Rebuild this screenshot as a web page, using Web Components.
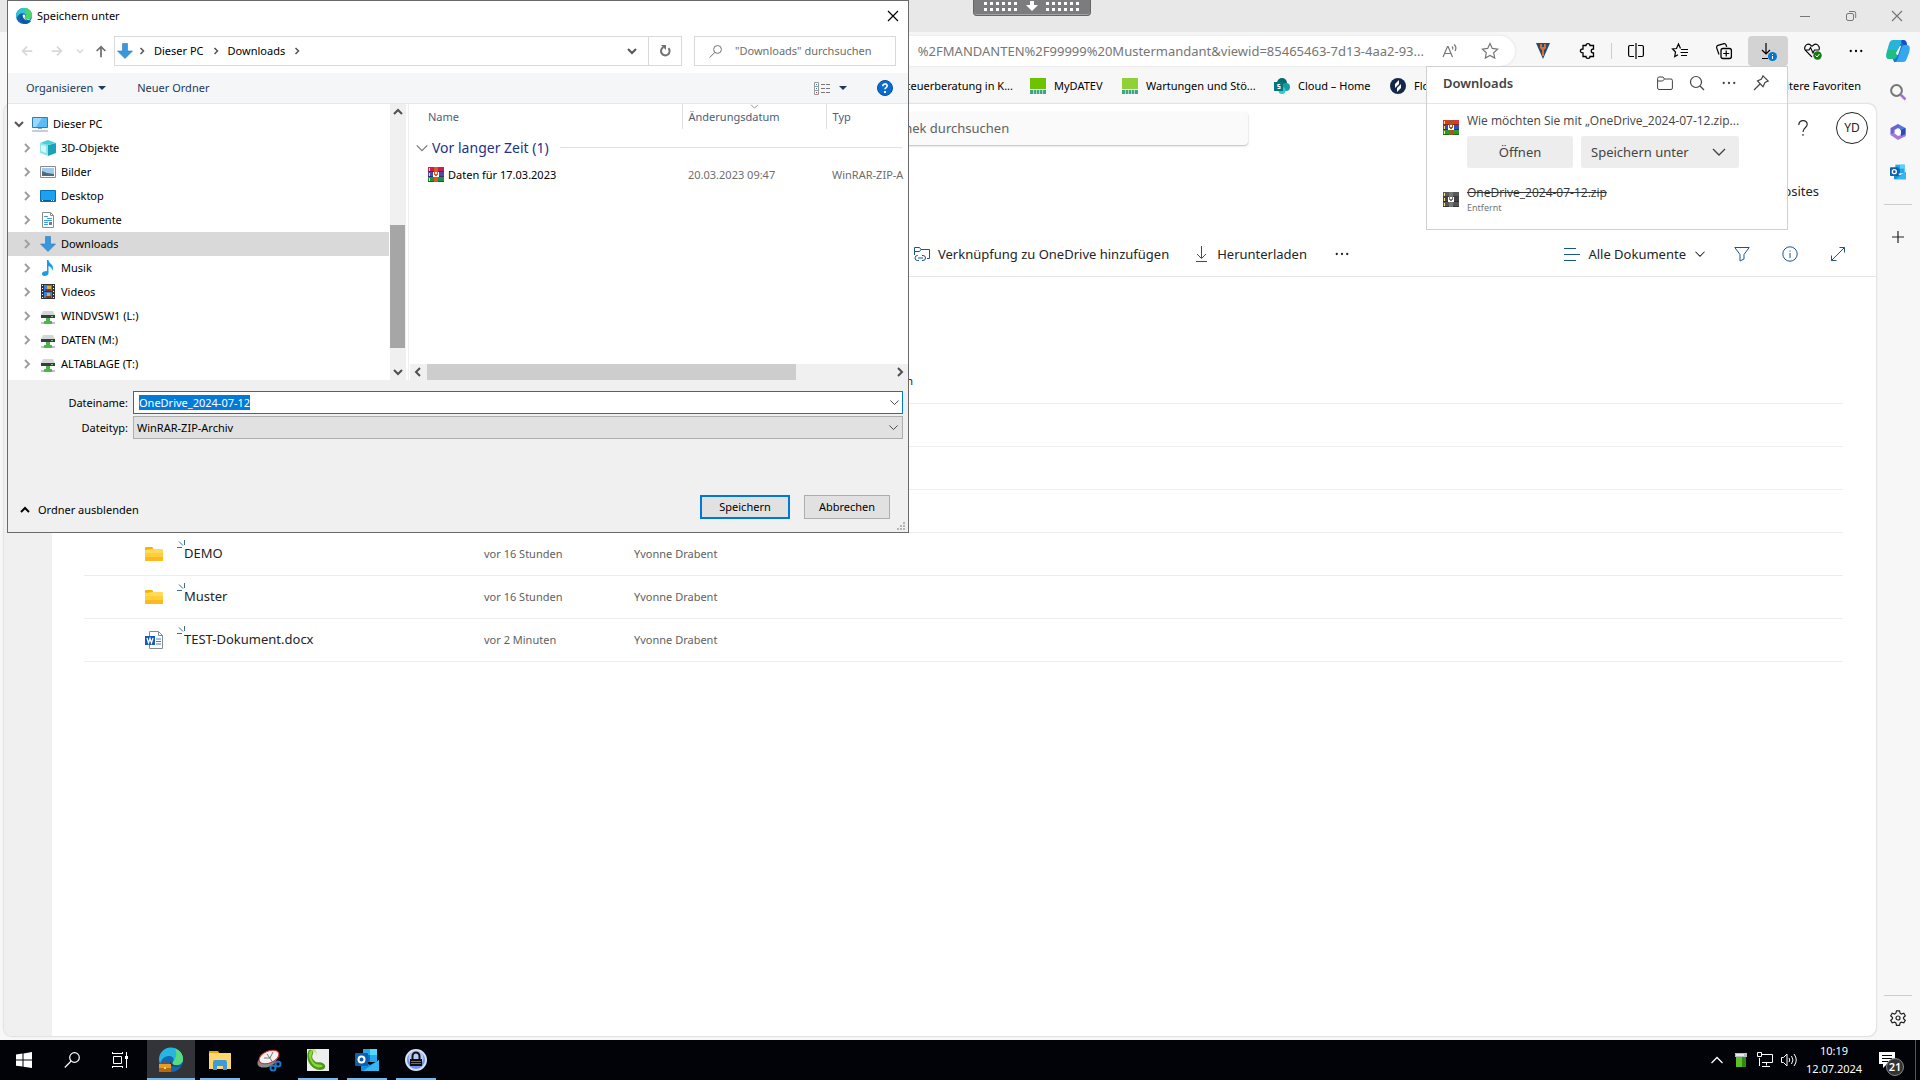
<!DOCTYPE html>
<html lang="de">
<head>
<meta charset="utf-8">
<title>Desktop</title>
<style>
  body {
    margin: 0;
    font-family: "Noto Sans", "Open Sans", sans-serif;
    font-size: 11px;
    line-height: 16px;
    color: #000;
  }
</style>
</head>
<body>
<desk-top>
  <browser-window></browser-window>
  <download-flyout slot="over"></download-flyout>
  <remote-bar slot="over"></remote-bar>
  <save-dialog slot="over"></save-dialog>
  <task-bar slot="bar"></task-bar>
</desk-top>

<script>
const stroke = (d, color = 'currentColor', width = 1) =>
  `<path d="${d}" fill="none" stroke="${color}" stroke-width="${width}"/>`

const rar = (a, b, c, d) => `
  <path fill="${a}" d="M0 0h16v5H0z"/><path fill="${b}" d="M0 5h16v5H0z"/><path fill="${c}" d="M0 10h16v5H0z"/>
  <path fill="#0005" d="M0 4h16v1H0zM0 9h16v1H0zM0 14h16v1H0z"/>
  <path fill="#fd8" d="M1 1h1v3H1zM1 6h1v3H1zM1 11h1v3H1z"/>
  <path fill="${d}" d="M6 0h4v15H6z"/><path fill="#fff" d="M5 5h6v5H5z"/><path fill="${d}" d="M6 5h1v3H6zM9 5h1v3H9zM7 7h2v2H7z"/>`

// name: [view box size, markup]
const ICONS = {
  edge: [24, `<circle cx="12" cy="12" r="12" fill="#1268b3"/>
    <path fill="#35c1d8" d="M0 12A12 12 0 0 1 24 11c0 4-3 6-7 6-3 0-4-1-3-3 2-4-1-6-4-6C5 8 2 12 1 16z"/>
    <path fill="#4dd56b" d="M12 0c7 0 12 5 12 11 0 4-3 6-7 6-3 0-4-1-3-3 3-4 1-10-2-14z"/>
    <path fill="#0c59a4" d="M9 9c-5 3-4 13 5 15 4-.5 7-2 9-5-6 3-16 0-14-10z"/>
    <path fill="#fff" d="M10 11c1-2 4-1 4 1 0 1-1 1-1 3 0 2 4 3 9 1-3 4-12 2-12-5z"/>`],
  edgework: [24, `<circle cx="12" cy="12" r="12" fill="#1268b3"/>
    <path fill="#28b5df" d="M0 12A12 12 0 0 1 24 11c0 4-3 6-7 6-3 0-4-1-3-3 2-4-1-6-4-6C5 8 2 12 1 16z"/>
    <path fill="#5bdc7c" d="M16 1c5 1 8 5 8 10 0 4-3 6-7 6-3 0-4-1-3-3 4-5 4-9 2-13z"/>
    <path fill="#333438" d="M11 13c2 5 7 6 12 4-2 2-8 2-12 0z"/>
    <path fill="#b36a12" d="M0 16h12v8H0z"/><path fill="#e69a27" d="M0 16h12v4H0z"/><path fill="#ffd24a" d="M5 19h2v2H5z"/>
    ${stroke('M4 16v-2h4v2', '#8a4b08')}`],
  down: [16, '<path fill="#3a96dd" stroke="#2b7cc0" stroke-width=".6" d="M5.500.5h5V8h5L8 15.500.500 8h5z"/>'],
  pc: [16, `<path fill="#5bbcf5" stroke="#2a7fb8" d="M.5 1.500h15v10H.5z"/><path fill="#9ad8fb" d="M1 2h9L4 11H1z"/>
    <path fill="#8aa0b4" d="M6 12h4v1H6zM0 14.500h16v1H0z"/>`],
  cube: [16, '<path fill="#8fe3ea" d="M0 3l8 2v11l-8-3z"/><path fill="#1aa3b8" d="M16 3L8 5v11l8-3z"/><path fill="#46cfdc" d="M0 3l8-3 8 3-8 2z"/><path fill="#d8f7f9" d="M1 5l5 1v7l-5-2z"/>'],
  image: [16, '<path fill="#fff" stroke="#8c8c8c" d="M.5 2.500h15v11H.5z"/><path fill="#9fc9ee" d="M2 4h12v8H2z"/><path fill="#4c6b78" d="M2 7l5 2 7 1v2H2z"/>'],
  desktop: [16, '<path fill="#1ba1f2" stroke="#0b6fb5" d="M.5 2.500h15v11H.5z"/><path fill="#0a5a94" d="M1 12h14v1H1z"/><path fill="#fff" d="M2 12h1v1H2zM11 12h1v1h-1zM13 12h1v1h-1z"/>'],
  doc: [16, `<path fill="#fff" stroke="#8c8c8c" d="M2.500.5h8l3 3v12h-11z"/>${stroke('M10.500.5v3h3', '#8c8c8c')}${stroke('M4 8.500h8M4 10.500h4M4 12.500h4M7 6.500h5M4 4.500h4', '#3d9be0')}<path fill="#5d8296" d="M9 10h3v3H9z"/>`],
  music: [16, '<path fill="#149cf0" d="M7 0h1.500c0 3 4.500 4 4.500 8 0 1-.5 2-1 3 0-3-1-4-3.500-5v7c0 2-2 3-4 3S2 15 2 13.500 4 11 7 11z"/>'],
  video: [16, '<path fill="#333" d="M1 0h14v15H1z"/><path fill="#3f7fd8" d="M4 1h8v6H4zM4 8h8v6H4z"/><path fill="#e0b13a" d="M7 2h4v3H7zM7 9h3v3H7z"/><path fill="#7b3f1c" d="M5 5h6v2H5zM6 12h5v2H6z"/><path fill="#fff" d="M2 1h1v1H2zM2 4h1v1H2zM2 7h1v1H2zM2 10h1v1H2zM2 13h1v1H2zM13 1h1v1h-1zM13 4h1v1h-1zM13 7h1v1h-1zM13 10h1v1h-1zM13 13h1v1h-1z"/>'],
  drive: [16, '<path fill="#d4d6d9" d="M3 3h10l2 4H1z"/><path fill="#3a3d40" d="M1 7h14v3H1z"/><path fill="#5fe06c" d="M11 8h2v1h-2z"/><path fill="#48b648" d="M6 10h4v3h2v3H4v-3h2z"/><path fill="#bfc3c6" d="M1 14h3v2H1zM12 14h3v2h-3z"/>'],
  rar: [16, rar('#c8214f', '#4a4aa8', '#1d9440', '#e2561d')],
  rar2: [16, rar('#d63a2a', '#2f4fc0', '#2b9a2b', '#a4571c')],
  rargray: [16, rar('#5a5a5a', '#444', '#555', '#777')],
  help: [16, '<circle cx="8" cy="8" r="7.500" fill="#0b6ccf" stroke="#08508f"/><path d="M5.800 6.200c0-3 4.400-3 4.400-.2 0 1.500-2.200 1.600-2.200 3.200" fill="none" stroke="#fff" stroke-width="1.600"/><path fill="#fff" d="M7 11h2v2H7z"/>'],
  view: [16, `<path fill="#fff" stroke="#999" d="M.5 2.500h4v12h-4z"/>${stroke('M1 6.500h4M1 10.500h4', '#999')}<path fill="#3a7bd5" d="M2 8h1v1H2zM2 4h1v1H2z"/><path fill="#d33" d="M2 12h1v1H2z"/>${stroke('M7 4.500h4M12 4.500h4M7 8.500h4M12 8.500h4M7 12.500h4M12 12.500h4', '#777')}`],
  back: [16, stroke('M14 8H3M8 3L3 8l5 5', '#d8d8d8', 2)],
  forward: [16, stroke('M2 8h11M8 3l5 5-5 5', '#d8d8d8', 2)],
  up: [16, stroke('M8 15V3M3 8l5-5 5 5', '#707070', 2)],
  chevdown: [16, stroke('M4 6l4 4 4-4', 'currentColor', 2)],
  chevup: [16, stroke('M4 10l4-4 4 4', 'currentColor', 2)],
  chevleft: [16, stroke('M10 4L6 8l4 4', 'currentColor', 2)],
  chevright: [16, stroke('M6 4l4 4-4 4', 'currentColor', 2)],
  thindown: [16, stroke('M2 5l6 6 6-6', 'currentColor', 1.400)],
  triangle: [16, '<path fill="currentColor" d="M4 6h8l-4 4z"/>'],
  refresh: [16, stroke('M11.500 5.200a4.300 4.300 0 1 1-5-1', '#707070', 2) + '<path fill="#707070" d="M4 2h5v5z"/>'],
  glass: [16, '<circle cx="10.500" cy="5.500" r="4.800" fill="none" stroke="currentColor" stroke-width="1.200"/>' + stroke('M7.200 9L.8 15.500', 'currentColor', 1.200)],
  close: [16, stroke('M3 3l10 10M13 3L3 13', 'currentColor', 1.200)],
  min: [16, stroke('M3 8.500h10')],
  restore: [16, '<rect x="3.500" y="5.500" width="7" height="7" rx="1.500" fill="none" stroke="currentColor"/>' + stroke('M6 3.500h5a1.700 1.700 0 0 1 1.700 1.700V10')],
  readaloud: [16, stroke('M1 14L5.500 3.500h.6L10.500 14M2.600 10.500h6.500M10 3.500c1 .8 1 2 .6 3M12 1.500c2.200 1.700 2.200 4.300 1 6.500', 'currentColor', 1.200)],
  star: [16, stroke('M8 .5l2.300 4.900 5.300.7-3.900 3.700 1 5.300L8 12.500l-4.700 2.600 1-5.300L.4 6.100l5.300-.7z', 'currentColor', 1.200)],
  vicon: [16, '<path fill="#1f4e74" d="M1 0h14L8 16z"/><path fill="#e8692c" d="M5 1h2v3h2V1h2v4L9 7v6H7V7L5 5z"/>'],
  puzzle: [16, stroke('M4 2.500h3c0-2.500 4-2.500 4 0h3.500V6c-3 0-3 4 0 4v3.500H11c0 2.500-4 2.500-4 0H4V10c-3.500 0-3.500-4 0-4z', 'currentColor', 1.300)],
  split: [16, stroke('M6 2.500H2A1.500 1.500 0 0 0 .6 4v8A1.500 1.500 0 0 0 2 13.500h4M10 2.500h4A1.500 1.500 0 0 1 15.400 4v8a1.500 1.500 0 0 1-1.400 1.500h-4M8 0v16', 'currentColor', 1.200)],
  favs: [16, stroke('M8.500 5.500L6.500 1 4.500 5.500l-4 .5 3 3-.8 4.600L6 11.800M9 6.500h7M8.500 9.500H16M9 12.500h6', 'currentColor', 1.200)],
  collect: [16, '<rect x="5" y="5.500" width="10.400" height="10" rx="2" fill="none" stroke="currentColor" stroke-width="1.300"/>' + stroke('M10.200 7.500v6M7.200 10.500h6M3 11.500L.6 4.600Q.4 3 2 2.400L8 .7q1.600-.2 2.200 1.600l.5 1.600', 'currentColor', 1.200)],
  dlbadge: [16, stroke('M6 0v11M2 7l4 4 4-4M2 15.500h6', 'currentColor', 1.200) + '<circle cx="12.500" cy="13.500" r="4.500" fill="#0078d4"/><path fill="#fff" d="M12 11h1v1h-1zM12 13h1v3h-1z"/>'],
  heart: [16, stroke('M8 14L1.500 7.500C-1 4 3-.5 6.500 2L8 3.300 9.500 2C13-.5 17 4 14.500 7.500M2 7h3l1.500-2.500L9 10l1.500-3H14', 'currentColor', 1.100) + '<circle cx="13.500" cy="12.500" r="4.200" fill="#107c10"/>' + stroke('M11.500 12.500l1.500 1.500 2.500-3', '#fff')],
  dots: [16, '<circle cx="2" cy="8" r="1.300"/><circle cx="8" cy="8" r="1.300"/><circle cx="14" cy="8" r="1.300"/>'],
  copilot: [24, '<path fill="#1f72d8" d="M9 1h8l3 4-7 18H8L6 18z"/><path fill="#28b4d8" d="M7 1h9l-5 16c-.6 2-2 3-4 3H3c-3 0-3.500-3-2-8l2-7c1-3 2-4 4-4z"/><path fill="#1dbd84" d="M2 11h11l-2 6c-.6 2-2 3-4 3H3c-3 0-3-4-1-9z"/><path fill="#1a4fc4" d="M17 1c-2 0-2 1-1 3s2 2 3 2h2c0-3-1-5-4-5z"/><path fill="#35a7f0" d="M17 23H8c2 0 3-1 4-4l3-9c.6-2 2-4 4-4h2c3 0 3.500 3 2 8l-2 5c-1 3-2 4-4 4z"/><path fill="#fff" d="M10 14l4-7h1l-3 9h-1z"/>'],
  railsearch: [16, '<circle cx="6.500" cy="6.500" r="5.400" fill="none" stroke="#767676" stroke-width="2"/><path d="M10.500 10.500l5 5" stroke="#a671d6" stroke-width="2.500"/>'],
  m365: [16, '<path fill="#4d7be0" d="M8 0l7.500 4v8L11 14l-1-9-5-2z"/><path fill="#6f63d2" d="M8 0L.5 4v7l4-2V6l5-3z"/><path fill="#a878d8" d="M.5 11l7.500 5 7.500-4v-2L8 12l-4-3z"/><path fill="#2f4bb0" d="M11 6l4.500-2v6L11 12z"/><path fill="#fff" d="M8 4.800l3 1.600v3.200l-3 1.600-3-1.600V6.400z"/>'],
  outlook: [24, '<path fill="#28a8ea" d="M8 1h14v13H8z"/><path fill="#50d9ff" d="M15 1h7v6h-7z"/><path fill="#0f6cbd" d="M8 7h7v7H8z"/><path fill="#1490df" d="M6 12l9 5 9-5v11H6z"/><path fill="#35b8f1" d="M24 12v11H8z"/><rect y="5" width="13" height="13" rx="1" fill="#0f5fae"/><circle cx="6.500" cy="11.500" r="3" fill="none" stroke="#fff" stroke-width="2"/>'],
  plus: [16, stroke('M8 2v12M2 8h12', 'currentColor', 1.200)],
  gear: [16, '<circle cx="8" cy="8" r="2" fill="none" stroke="currentColor" stroke-width="1.200"/>' + stroke('M6.500.8h3l.6 2.400 1.300.8 2.400-.8 1.500 2.600L13.500 7.500v1.200l1.800 1.600-1.500 2.600-2.400-.7-1.300.8-.6 2.300h-3l-.6-2.300-1.300-.8-2.400.7L.7 10.300l1.800-1.600V7.500L.7 5.800l1.500-2.600 2.400.8 1.300-.8z', 'currentColor', 1.200)],
  folderline: [16, stroke('M.6 13V3.500q0-1.500 1.500-1.500H6l1.500 2H14q1.400 0 1.400 1.500V13q0 1.500-1.400 1.500H2Q.6 14.500.6 13zM.6 6h5L7.500 4')],
  search: [16, '<circle cx="7" cy="7" r="5.500" fill="none" stroke="currentColor" stroke-width="1.200"/>' + stroke('M11 11l4 4', 'currentColor', 1.200)],
  pin: [16, stroke('M10 .8L15.200 6 12 7.500l-2 4.200L4.500 6 8.500 4zM7 9L1 15', 'currentColor', 1.200)],
  datev: [16, '<path fill="#6cc400" d="M0 0h16v11H0z"/>' + stroke('M0 14h16', '#3fa58a', 4) + stroke('M3.500 12v4M6.500 12v4M9.500 12v4M12.500 12v4', '#f7f7f7', .600)],
  datev2: [16, '<path fill="#92d038" d="M0 0h16v11H0z"/>' + stroke('M0 14h16', '#3fa58a', 4) + stroke('M3.500 12v4M6.500 12v4M9.500 12v4M12.500 12v4', '#f7f7f7', .600)],
  sharepoint: [16, '<circle cx="8" cy="5" r="5" fill="#036c70"/><circle cx="12" cy="9" r="4" fill="#1a9ba1"/><circle cx="8" cy="12.500" r="3.500" fill="#37c6d0"/><path fill="#03787c" d="M0 4h9v9H0z"/>' + stroke('M6.200 6.500H4v2h2v2H3.500', '#fff', 1.200)],
  flow: [16, '<circle cx="8" cy="8" r="8" fill="#14284b"/><path fill="#fff" d="M9 2L5 6v4l4-4zM11 6L7 10v4l4-4z"/>'],
  addlink: [16, stroke('M.5 9V1.500h5L7 3.500h8.500v9H13M.5 5.500h5L7 3.500M4 9.500H3.500a2.500 2.500 0 0 0 0 5H5M8 9.500h1a2.500 2.500 0 0 1 0 5H8M4 12h5', '#1a5490')],
  fetch: [16, stroke('M8.500 0v12M4 8l4.500 4.500L13 8M3 15.500h11', '#1a5490')],
  lines: [16, stroke('M0 2.500h12M0 8.500h16M0 14.500h12', '#1a5490')],
  filter: [16, stroke('M.8 1.500h14.400L10 8.500V13l-4 2V8.500z', '#1a5490')],
  info: [16, '<circle cx="8" cy="8" r="7.200" fill="none" stroke="#1a5490"/>' + stroke('M8 7v5M8 4.500v1.200', '#1a5490')],
  expand: [16, stroke('M9.500 1.500h5v5M14.500 1.500l-13 13M1.500 9.500v5h5', '#1a5490')],
  question: [16, stroke('M3.800 5C3.500-.8 12.500-.8 12.200 4.500 12 8 8 7.500 8 12M8 14v1.800', 'currentColor', 1.200)],
  folder: [18, '<path fill="#f5b400" d="M0 3q0-1 1-1h6l1 1v3H0z"/><path fill="#ffdb57" d="M0 5l8-1h9q1 0 1 1v11H0z"/><path fill="#fece3c" d="M0 8h18v4H0z"/><path fill="#fdb91f" d="M0 12h18v3q0 1-1 1H1q-1 0-1-1z"/>'],
  word: [18, `<path fill="#fff" stroke="#8a8a8a" d="M4.500.5h9l4 4v13h-13z"/>${stroke('M13.500.5v4h4', '#8a8a8a')}${stroke('M11 8h5M11 10.500h5M11 13h5', '#2b88d8', 1.200)}<path fill="#185abd" d="M0 5h10v9H0z"/>${stroke('M2 7l1.500 5L5 7.500 6.500 12 8 7', '#fff', 1.200)}`],
  spark: [8, stroke('M7.500 0v5M2 1.500l4 4M0 7.500h5', '#3b6f96')],
  start: [16, '<path fill="#fff" d="M0 2.500L6.500 1.600v6H0zM7.500 1.400L16 0v7.600H7.500zM0 8.600h6.500v6L0 13.700zM7.500 8.600H16V16l-8.500-1.200z"/>'],
  taskview: [16, stroke('M0 1.500h11M0 14.500h11M1.500 4.500h8v7h-8zM.5 0v2M10.500 0v2M.5 14v2M10.500 14v2M14.500 0v16', '#fff') + '<path fill="#fff" d="M13 4h3v3h-3z"/>'],
  explorer: [24, '<path fill="#e8a317" d="M1 3h9l2 3H1z"/><path fill="#ffd66b" d="M1 5h22v16H1z"/><path fill="#3e9bdb" d="M5 14q0-2 2-2h10q2 0 2 2v8h-4v-4H9v4H5z"/>'],
  snip: [24, '<ellipse cx="10" cy="13" rx="10" ry="6" transform="rotate(-20 10 13)" fill="#8b8b8b"/><ellipse cx="12" cy="9" rx="10.500" ry="6" transform="rotate(-22 12 9)" fill="#f2f2f2" stroke="#d42a2a"/>' + stroke('M7 10h6l3-6M10 6l7 10', '#777') + '<circle cx="16" cy="20" r="2.500" fill="none" stroke="#1e78c8" stroke-width="2"/><circle cx="21" cy="16" r="2.500" fill="none" stroke="#1e78c8" stroke-width="2"/>'],
  phone: [24, '<path fill="#eee" d="M1 1h22v22H1z"/><path fill="#4a9a18" d="M3 2c4-1 5 2 4 4-2 3 0 6 3 8 2 1 4-1 8 2 3 3 0 6-4 6C5 22-2 10 3 2z"/><path fill="#8fd43a" d="M4 3c3-1 3 1 2 3-2 4 1 8 4 10 3 1 5 0 7 2-4 3-9 1-12-4C3 10 2 6 4 3z"/><path fill="#b9e36b" d="M4 2c5 1 7 3 6 7 1-3 1-6-2-8z"/>'],
  keepass: [24, '<circle cx="12" cy="12" r="10" fill="#6f93e6" stroke="#d7e1f7" stroke-width="2"/><circle cx="12" cy="10" r="7.500" fill="#b8cbf5"/>' + stroke('M8.500 12V8a3.500 3.500 0 0 1 7 0v4', '#111', 2) + '<path fill="#111" d="M6 11h12v7H6z"/>' + stroke('M7 13.500h10M7 15.500h10', '#8fa8e0', .600)],
  traychev: [16, stroke('M2.500 11L8 5.500 13.500 11', '#fff', 1.300)],
  usb: [16, '<path fill="#b9bccb" d="M2 1h12v4H2z"/><path fill="#e8e8f4" d="M3 2h8v2H3z"/><path fill="#5fbf2a" d="M3 5h10v10H3z"/><path fill="#2f8a12" d="M9 5h4v10H9z"/>'],
  network: [16, stroke('M4.500 2.500h11v8H5M2.500 6v8M9.500 11v2.500M5 14.500h8M.5.5h4v4h-4z', '#fff')],
  sound: [16, stroke('M.5 5.500h2L6 2v12l-3.500-3.500h-2zM8 6q1.500 2 0 4M10.500 4q3 4 0 8M13 2q4.500 6 0 12', '#fff')],
  notify: [16, '<path fill="#fff" d="M0 0h16v12h-8l-4 4v-4H0z"/>' + stroke('M3 3.500h10M3 6.500h10M3 9.500h6', '#000', 1.200)],
  grip: [8, '<path fill="#b5b5b5" d="M6 0h2v2H6zM3 3h2v2H3zM6 3h2v2H6zM0 6h2v2H0zM3 6h2v2H3zM6 6h2v2H6z"/>']
}

/**
 * Registers an element whose shadow root is cloned from the given markup.
 */
function define (name, markup, Base = HTMLElement) {
  const template = document.createElement('template')
  template.innerHTML = markup

  customElements.define(name, class extends Base {
    connectedCallback () {
      if (this.shadowRoot) return
      this.attachShadow({ mode: 'open' })
      this.shadowRoot.appendChild(template.content.cloneNode(true))
      if (this.ready) this.ready()
    }
  })
}

/**
 * A drawn icon: <svg-icon name="star" size="16">.
 */
customElements.define('svg-icon', class extends HTMLElement {
  connectedCallback () {
    if (this.shadowRoot) return
    const [box, markup] = ICONS[this.getAttribute('name')]
    const size = this.getAttribute('size') || 16
    this.attachShadow({ mode: 'open' })
    this.shadowRoot.innerHTML = `
      <style>
        :host { display: inline-flex; flex: none; }
        svg { display: block; overflow: visible; }
      </style>
      <svg width="${size}" height="${size}" viewBox="0 0 ${box} ${box}" fill="currentColor" aria-hidden="true">${markup}</svg>`
  }
})

// Shared by every element that holds buttons
const reset = `
  * { box-sizing: border-box; }
  button, input, select {
    margin: 0;
    padding: 0;
    border: 0;
    background: none;
    font: inherit;
    color: inherit;
    outline: none;
  }
  button { display: flex; align-items: center; justify-content: center; }
  a { color: inherit; text-decoration: none; }
`

define('desk-top', `
<style>
  :host { display: flex; flex-direction: column; height: 100vh; position: relative; overflow: hidden; }
  ::slotted(browser-window) { flex: 1; min-height: 0; }
</style>
<slot></slot>
<slot name="bar"></slot>
<slot name="over"></slot>
`)

define('browser-window', `
<style>
  ${reset}
  :host { display: flex; flex-direction: column; background: #f7f7f7; }
  header { display: flex; justify-content: flex-end; height: 32px; background: #e8e8e8; color: #777; }
  header button { width: 46px; }
  .body { flex: 1; min-height: 0; display: flex; }
  .left { flex: 1; min-width: 0; display: flex; flex-direction: column; }
  .panel {
    flex: 1;
    display: flex;
    margin: 0 0 4px 4px;
    border-radius: 8px;
    overflow: hidden;
    background: #fff;
    box-shadow: 0 0 2px #aaa;
  }
  .appbar { width: 48px; background: #f0f0f0; }
  library-page { flex: 1; min-width: 0; }
</style>
<header>
  <button aria-label="Minimieren"><svg-icon name="min"></svg-icon></button>
  <button aria-label="Verkleinern"><svg-icon name="restore"></svg-icon></button>
  <button aria-label="Schließen"><svg-icon name="close"></svg-icon></button>
</header>
<browser-toolbar></browser-toolbar>
<div class="body">
  <div class="left">
    <bookmark-bar></bookmark-bar>
    <div class="panel">
      <div class="appbar"></div>
      <library-page></library-page>
    </div>
  </div>
  <side-rail></side-rail>
</div>
`)

define('browser-toolbar', `
<style>
  ${reset}
  :host { display: flex; align-items: center; gap: 4px; padding: 4px 4px 0 100px; }
  .address {
    flex: 1;
    display: flex;
    height: 30px;
    margin-right: 4px;
    padding-right: 5px;
    border-radius: 15px;
    background: #fff;
    box-shadow: 0 0 3px #ddd;
    color: #767676;
  }
  .address input { flex: 1; min-width: 0; padding-right: 6px; text-align: right; font-size: 13px; }
  button { width: 40px; height: 30px; border-radius: 4px; }
  button.on { background: #d3d3d3; }
  button.copilot { width: 36px; }
  i { width: 1px; height: 16px; background: #ccc; }
</style>
<div class="address">
  <input aria-label="Adresse" value="%2FMANDANTEN%2F99999%20Mustermandant&amp;viewid=85465463-7d13-4aa2-93...">
  <button aria-label="Laut vorlesen"><svg-icon name="readaloud"></svg-icon></button>
  <button aria-label="Zu Favoriten"><svg-icon name="star"></svg-icon></button>
</div>
<button aria-label="Erweiterung"><svg-icon name="vicon"></svg-icon></button>
<button aria-label="Erweiterungen"><svg-icon name="puzzle"></svg-icon></button>
<i></i>
<button aria-label="Geteilter Bildschirm"><svg-icon name="split"></svg-icon></button>
<button aria-label="Favoriten"><svg-icon name="favs"></svg-icon></button>
<button aria-label="Sammlungen"><svg-icon name="collect"></svg-icon></button>
<button class="on" aria-label="Downloads"><svg-icon name="dlbadge"></svg-icon></button>
<button aria-label="Browser-Essentials"><svg-icon name="heart"></svg-icon></button>
<button aria-label="Mehr"><svg-icon name="dots" size="14"></svg-icon></button>
<button class="copilot" aria-label="Copilot"><svg-icon name="copilot" size="24"></svg-icon></button>
`)

define('bookmark-bar', `
<style>
  ${reset}
  :host {
    box-sizing: border-box;
    display: grid;
    grid-template-columns: 1030px 92px 152px 116px 1fr auto;
    align-items: center;
    height: 38px;
    padding: 2px 15px 0 0;
  }
  a { display: flex; align-items: center; gap: 8px; white-space: nowrap; }
  a:first-of-type { justify-content: flex-end; padding-right: 17px; }
</style>
<a href="#">Steuerberatung in K...</a>
<a href="#"><svg-icon name="datev"></svg-icon>MyDATEV</a>
<a href="#"><svg-icon name="datev2"></svg-icon>Wartungen und Stö...</a>
<a href="#"><svg-icon name="sharepoint"></svg-icon>Cloud – Home</a>
<a href="#"><svg-icon name="flow"></svg-icon>Flo</a>
<a href="#">Weitere Favoriten</a>
`)

define('side-rail', `
<style>
  ${reset}
  :host { display: flex; flex-direction: column; align-items: center; width: 44px; padding-top: 6px; color: #222; }
  button { width: 40px; height: 40px; }
  hr { width: 28px; height: 1px; margin: 12px 0; border: 0; background: #ccc; }
  .end { display: flex; flex-direction: column; align-items: center; margin-top: auto; padding-bottom: 2px; }
  .end hr { margin: 0 0 2px; }
</style>
<button aria-label="Suche"><svg-icon name="railsearch"></svg-icon></button>
<button aria-label="Microsoft 365"><svg-icon name="m365"></svg-icon></button>
<button aria-label="Outlook"><svg-icon name="outlook" size="16"></svg-icon></button>
<hr>
<button aria-label="Hinzufügen"><svg-icon name="plus"></svg-icon></button>
<div class="end">
  <hr>
  <button aria-label="Einstellungen"><svg-icon name="gear"></svg-icon></button>
</div>
`)

define('library-page', `
<style>
  ${reset}
  :host { display: flex; flex-direction: column; font-size: 13px; color: #242424; }
  .suite { display: flex; align-items: center; height: 48px; padding-right: 8px; }
  .suite input {
    width: 464px;
    height: 33px;
    margin-left: 732px;
    padding-left: 44px;
    border-radius: 4px;
    background: #fafafa;
    box-shadow: 0 1px 2px #bbb;
  }
  .suite input::placeholder { color: #616161; opacity: 1; }
  .suite .help { width: 32px; height: 32px; margin-left: auto; }
  .avatar { width: 32px; height: 32px; margin-left: 17px; border: 1px solid #222; border-radius: 50%; font-size: 12px; }
  .follow { display: flex; justify-content: flex-end; align-items: center; height: 80px; padding: 0 57px 2px 0; }
  .commands {
    display: flex;
    align-items: center;
    height: 45px;
    padding: 0 26px 0 862px;
    border-bottom: 1px solid #e6e6e6;
  }
  .commands button { gap: 8px; }
  .commands button + button { margin-left: 24px; }
  .commands button.more { margin-left: 28px; }
  .commands button.views { margin-left: auto; }
  .commands .views ~ button { width: 24px; }
  file-table { margin: 83px 33px 0 32px; }
</style>
<div class="suite">
  <input type="search" aria-label="Suche" placeholder="Diese Bibliothek durchsuchen">
  <button class="help" aria-label="Hilfe"><svg-icon name="question"></svg-icon></button>
  <button class="avatar">YD</button>
</div>
<div class="follow"><a href="#">Websites</a></div>
<div class="commands">
  <button><svg-icon name="addlink"></svg-icon>Verknüpfung zu OneDrive hinzufügen</button>
  <button><svg-icon name="fetch"></svg-icon>Herunterladen</button>
  <button class="more" aria-label="Weitere Befehle"><svg-icon name="dots" size="14"></svg-icon></button>
  <button class="views"><svg-icon name="lines"></svg-icon>Alle Dokumente<svg-icon name="thindown" size="12"></svg-icon></button>
  <button aria-label="Filter"><svg-icon name="filter"></svg-icon></button>
  <button aria-label="Details"><svg-icon name="info"></svg-icon></button>
  <button aria-label="Erweitern"><svg-icon name="expand"></svg-icon></button>
</div>
<file-table></file-table>
`)

define('file-table', `
<style>
  ${reset}
  :host { display: block; }
  table { width: 100%; table-layout: fixed; border-collapse: collapse; font-size: 11px; color: #616161; }
  th, td { height: 43px; padding: 0; border-bottom: 1px solid #ededed; text-align: left; }
  .kind { width: 100px; padding-left: 61px; }
  .kind svg-icon { vertical-align: middle; }
  .name { width: 300px; }
  .date { width: 150px; }
  .author { width: 180px; }
  th:last-child { font-weight: 400; color: #242424; }
  th span { display: block; width: 99px; text-align: right; white-space: nowrap; }
  td.name a { position: relative; font-size: 13px; color: #242424; }
  td.name a svg-icon { position: absolute; left: -7px; top: -4px; }
</style>
<table>
  <thead>
    <tr><th class="kind"></th><th class="name"></th><th class="date"></th><th class="author"></th><th><span>Spalte hinzufügen</span></th></tr>
  </thead>
  <tbody>
    <tr><td></td><td></td><td></td><td></td><td></td></tr>
    <tr><td></td><td></td><td></td><td></td><td></td></tr>
    <tr><td></td><td></td><td></td><td></td><td></td></tr>
    <tr><td class="kind"><svg-icon name="folder" size="18"></svg-icon></td><td class="name"><a href="#"><svg-icon name="spark" size="8"></svg-icon>DEMO</a></td><td>vor 16 Stunden</td><td>Yvonne Drabent</td><td></td></tr>
    <tr><td class="kind"><svg-icon name="folder" size="18"></svg-icon></td><td class="name"><a href="#"><svg-icon name="spark" size="8"></svg-icon>Muster</a></td><td>vor 16 Stunden</td><td>Yvonne Drabent</td><td></td></tr>
    <tr><td class="kind"><svg-icon name="word" size="18"></svg-icon></td><td class="name"><a href="#"><svg-icon name="spark" size="8"></svg-icon>TEST-Dokument.docx</a></td><td>vor 2 Minuten</td><td>Yvonne Drabent</td><td></td></tr>
  </tbody>
</table>
`)

define('download-flyout', `
<style>
  ${reset}
  :host {
    position: absolute;
    top: 66px;
    right: 132px;
    box-sizing: border-box;
    width: 362px;
    height: 164px;
    border: 1px solid #d0d0d0;
    background: #fff;
    color: #444;
  }
  header { display: flex; align-items: center; height: 37px; padding: 0 10px 4px 16px; border-bottom: 1px solid #e5e5e5; }
  h2 { flex: 1; margin: 0; font-size: 13px; font-weight: 600; }
  header button { width: 32px; height: 32px; }
  .item { display: grid; grid-template-columns: 16px 1fr; column-gap: 8px; padding: 8px 16px 0; }
  .item > svg-icon { margin-top: 8px; }
  .item p { margin: 0; font-family: "Open Sans", sans-serif; font-size: 12px; line-height: 18px; }
  .item small { display: block; font-size: 9px; line-height: 12px; color: #767676; }
  .item s { color: #333; }
  .row { display: flex; gap: 8px; margin-top: 6px; }
  .row button { height: 32px; border-radius: 2px; background: #ededed; font-size: 13px; }
  .open { width: 106px; }
  .row .saveas { width: 158px; justify-content: space-between; padding: 0 12px 0 10px; }
  .gone { padding-top: 16px; }
</style>
<header>
  <h2>Downloads</h2>
  <button aria-label="Ordner öffnen"><svg-icon name="folderline"></svg-icon></button>
  <button aria-label="Downloads durchsuchen"><svg-icon name="search"></svg-icon></button>
  <button aria-label="Weitere Optionen"><svg-icon name="dots" size="14"></svg-icon></button>
  <button aria-label="Anheften"><svg-icon name="pin"></svg-icon></button>
</header>
<div class="item">
  <svg-icon name="rar2"></svg-icon>
  <div>
    <p>Wie möchten Sie mit „OneDrive_2024-07-12.zip...</p>
    <div class="row">
      <button class="open">Öffnen</button>
      <button class="saveas">Speichern unter<svg-icon name="thindown"></svg-icon></button>
    </div>
  </div>
</div>
<div class="item gone">
  <svg-icon name="rargray"></svg-icon>
  <div><p><s>OneDrive_2024-07-12.zip</s></p><small>Entfernt</small></div>
</div>
`)

define('remote-bar', `
<style>
  :host {
    position: absolute;
    top: 0;
    left: 973px;
    box-sizing: border-box;
    display: flex;
    align-items: center;
    justify-content: center;
    gap: 8px;
    width: 118px;
    height: 16px;
    padding-bottom: 3px;
    border: 1px solid #666;
    border-top: 0;
    border-radius: 0 0 4px 4px;
    background: #7c7c7e;
    box-shadow: inset 0 -1px 0 #a5a5a5;
  }
  svg { display: block; }
</style>
<svg width="34" height="9"><path d="M0 1.500h34M0 7.500h34" stroke="#fff" stroke-width="3" stroke-dasharray="3 3"/></svg>
<svg width="12" height="10"><path fill="#fff" d="M4 0h4v4h4l-6 6-6-6h4z"/></svg>
<svg width="34" height="9"><path d="M0 1.500h34M0 7.500h34" stroke="#fff" stroke-width="3" stroke-dasharray="3 3"/></svg>
`)

define('tree-item', `
<style>
  :host {
    display: flex;
    align-items: center;
    height: 24px;
    padding-left: 11px;
    color: #a0a0a0;
  }
  :host([root]) { padding-left: 3px; color: #555; }
  :host([selected]) { background: #d9d9d9; }
  slot[name] { display: flex; }
  .mark { margin-right: 5px; }
  .label { margin-left: 5px; color: #000; }
</style>
<svg-icon class="mark" name="chevright"></svg-icon>
<slot name="icon"></slot>
<span class="label"><slot></slot></span>
`, class extends HTMLElement {
  ready () {
    if (this.hasAttribute('root')) {
      const open = document.createElement('svg-icon')
      open.setAttribute('name', 'chevdown')
      open.className = 'mark'
      this.shadowRoot.querySelector('.mark').replaceWith(open)
    }
  }
})

define('save-dialog', `
<style>
  ${reset}
  :host {
    position: absolute;
    top: 0;
    left: 7px;
    box-sizing: border-box;
    display: flex;
    flex-direction: column;
    width: 902px;
    height: 533px;
    border: 1px solid #6a6a6a;
    background: #fff;
  }
  .title { display: flex; align-items: center; gap: 5px; height: 30px; padding: 0 7px 0 8px; }
  .title button { margin-left: auto; }
  .nav { display: flex; align-items: center; height: 42px; padding: 0 12px 2px 11px; }
  .nav > button { width: 16px; height: 30px; margin-right: 14px; }
  .nav > button.recent { width: 12px; margin: 0 7px 0 -5px; color: #d8d8d8; }
  .nav > button.parent { margin-right: 5px; }
  .path { flex: 1; display: flex; align-items: center; height: 30px; border: 1px solid #d9d9d9; color: #555; }
  .path > svg-icon:first-child { margin: 0 3px 0 2px; }
  .path a { margin: 0 6px; color: #000; }
  .path button { width: 33px; height: 28px; }
  .path .history { margin-left: auto; width: 32px; }
  .path .reload { border-left: 1px solid #d9d9d9; }
  .find { display: flex; align-items: center; gap: 13px; width: 202px; height: 30px; margin-left: 12px; padding: 0 4px 0 14px; border: 1px solid #d9d9d9; color: #6d6d6d; }
  .find input { flex: 1; min-width: 0; }
  .find input::placeholder { color: #6d6d6d; opacity: 1; }
  .tools { display: flex; align-items: center; height: 31px; padding: 0 15px 0 18px; border-bottom: 1px solid #e5e7ea; background: #f4f6f8; color: #1e395b; }
  .tools button { gap: 1px; }
  .tools .view { gap: 5px; margin-left: auto; margin-right: 26px; }
  .tools .new { margin-left: 27px; }
  .panes { display: flex; height: 276px; }
  .tree { width: 381px; padding-top: 8px; overflow: hidden; }
  .vbar { width: 16px; display: flex; flex-direction: column; align-items: center; margin-left: 1px; background: #f0f0f0; color: #505050; }
  .vbar i { width: 15px; height: 123px; margin: 105px 1px auto 0; background: #a6a6a6; }
  .list { flex: 1; min-width: 0; display: flex; flex-direction: column; margin-left: 2px; border-left: 1px solid #eee; overflow: hidden; }
  table { width: 499px; table-layout: fixed; border-collapse: collapse; }
  th, td { padding: 0 0 0 6px; font-weight: 400; text-align: left; white-space: nowrap; }
  th { height: 25px; color: #4c607a; border-right: 1px solid #e0e0e0; position: relative; }
  th:first-child, td:first-child { width: 273px; padding-left: 19px; }
  th:nth-child(2) { width: 144px; }
  th:last-child { border: 0; }
  th svg-icon { position: absolute; top: -2px; left: 67px; color: #777; }
  .group { height: 37px; }
  .group div { display: flex; align-items: center; gap: 3px; margin-left: -13px; font-size: 14px; color: #1e3287; }
  .group svg-icon { color: #777; }
  .group span { flex: 1; height: 1px; margin: 0 6px 0 8px; background: #e0e0e0; }
  .file td { height: 18px; color: #6d6d6d; }
  .file div { display: flex; align-items: center; gap: 4px; color: #000; }
  .hbar { display: flex; align-items: center; height: 16px; margin-top: auto; margin-left: 1px; background: #f0f0f0; color: #505050; }
  .hbar i { width: 369px; height: 16px; margin: 0 auto 0 1px; background: #cdcdcd; }
  form { flex: 1; display: flex; flex-direction: column; background: #f0f0f0; }
  .fields { display: grid; grid-template-columns: 120px 1fr; gap: 2px 5px; padding: 11px 5px 0 0; text-align: right; }
  .fields label { line-height: 23px; }
  .box { display: flex; align-items: center; height: 23px; border: 1px solid #adadad; background: #e1e1e1; position: relative; color: #444; }
  .box input, .box select { flex: 1; height: 15px; padding-left: 5px; line-height: 15px; color: #000; }
  .box select { height: 21px; padding-left: 3px; appearance: none; }
  .box.name { border-color: #0078d7; background: #fff; }
  .box button { width: 16px; }
  .box > svg-icon { position: absolute; right: 3px; pointer-events: none; }
  .box input::selection { background: rgba(0, 120, 215, .99); color: #fff; }
  .actions { display: flex; align-items: flex-end; margin-top: auto; padding: 0 18px 13px 9px; position: relative; }
  .actions .fold { gap: 5px; margin-right: auto; height: 18px; color: #000; }
  .actions .push { width: 86px; height: 24px; margin-left: 14px; border: 1px solid #adadad; background: #e1e1e1; }
  .actions .push.main { width: 90px; border: 2px solid #0078d7; }
  .actions > svg-icon { position: absolute; right: 3px; bottom: 2px; }
</style>
<div class="title">
  <svg-icon name="edge"></svg-icon>Speichern unter
  <button aria-label="Schließen"><svg-icon name="close"></svg-icon></button>
</div>
<div class="nav">
  <button aria-label="Zurück"><svg-icon name="back" size="14"></svg-icon></button>
  <button aria-label="Vorwärts"><svg-icon name="forward" size="14"></svg-icon></button>
  <button class="recent" aria-label="Zuletzt besucht"><svg-icon name="chevdown" size="12"></svg-icon></button>
  <button class="parent" aria-label="Nach oben"><svg-icon name="up" size="14"></svg-icon></button>
  <div class="path">
    <svg-icon name="down"></svg-icon>
    <svg-icon name="chevright" size="12"></svg-icon><a href="#">Dieser PC</a>
    <svg-icon name="chevright" size="12"></svg-icon><a href="#">Downloads</a>
    <svg-icon name="chevright" size="12"></svg-icon>
    <button class="history" aria-label="Verlauf"><svg-icon name="chevdown"></svg-icon></button>
    <button class="reload" aria-label="Aktualisieren"><svg-icon name="refresh"></svg-icon></button>
  </div>
  <div class="find">
    <svg-icon name="glass" size="13"></svg-icon>
    <input aria-label="Suchen" placeholder='"Downloads" durchsuchen'>
  </div>
</div>
<div class="tools">
  <button>Organisieren<svg-icon name="triangle"></svg-icon></button>
  <button class="new">Neuer Ordner</button>
  <button class="view" aria-label="Ansicht"><svg-icon name="view"></svg-icon><svg-icon name="triangle"></svg-icon></button>
  <button aria-label="Hilfe"><svg-icon name="help"></svg-icon></button>
</div>
<div class="panes">
  <div class="tree">
    <tree-item root><svg-icon slot="icon" name="pc"></svg-icon>Dieser PC</tree-item>
    <tree-item><svg-icon slot="icon" name="cube"></svg-icon>3D-Objekte</tree-item>
    <tree-item><svg-icon slot="icon" name="image"></svg-icon>Bilder</tree-item>
    <tree-item><svg-icon slot="icon" name="desktop"></svg-icon>Desktop</tree-item>
    <tree-item><svg-icon slot="icon" name="doc"></svg-icon>Dokumente</tree-item>
    <tree-item selected><svg-icon slot="icon" name="down"></svg-icon>Downloads</tree-item>
    <tree-item><svg-icon slot="icon" name="music"></svg-icon>Musik</tree-item>
    <tree-item><svg-icon slot="icon" name="video"></svg-icon>Videos</tree-item>
    <tree-item><svg-icon slot="icon" name="drive"></svg-icon>WINDVSW1 (L:)</tree-item>
    <tree-item><svg-icon slot="icon" name="drive"></svg-icon>DATEN (M:)</tree-item>
    <tree-item><svg-icon slot="icon" name="drive"></svg-icon>ALTABLAGE (T:)</tree-item>
  </div>
  <div class="vbar"><svg-icon name="chevup"></svg-icon><i></i><svg-icon name="chevdown"></svg-icon></div>
  <div class="list">
    <table>
      <thead><tr><th>Name</th><th>Änderungsdatum<svg-icon name="thindown" size="9"></svg-icon></th><th>Typ</th></tr></thead>
      <tbody>
        <tr><td class="group" colspan="3"><div><svg-icon name="thindown" size="14"></svg-icon>Vor langer Zeit (1)<span></span></div></td></tr>
        <tr class="file"><td><div><svg-icon name="rar"></svg-icon>Daten für 17.03.2023</div></td><td>20.03.2023 09:47</td><td>WinRAR-ZIP-A</td></tr>
      </tbody>
    </table>
    <div class="hbar"><svg-icon name="chevleft"></svg-icon><i></i><svg-icon name="chevright"></svg-icon></div>
  </div>
</div>
<form>
  <div class="fields">
    <label for="file">Dateiname:</label>
    <div class="box name"><input id="file" value="OneDrive_2024-07-12"><button type="button" aria-label="Vorschläge"><svg-icon name="thindown" size="11"></svg-icon></button></div>
    <label for="type">Dateityp:</label>
    <div class="box"><select id="type"><option>WinRAR-ZIP-Archiv</option></select><svg-icon name="thindown" size="11"></svg-icon></div>
  </div>
  <div class="actions">
    <button type="button" class="fold"><svg-icon name="chevup"></svg-icon>Ordner ausblenden</button>
    <button type="button" class="push main">Speichern</button>
    <button type="button" class="push">Abbrechen</button>
    <svg-icon name="grip" size="8"></svg-icon>
  </div>
</form>
`, class extends HTMLElement {
  ready () {
    const file = this.shadowRoot.querySelector('#file')
    file.focus()
    file.select()
  }
})

define('task-button', `
<style>
  ${reset}
  :host { display: flex; }
  button { width: 48px; height: 40px; position: relative; color: #fff; }
  :host([active]) button { background: #333438; }
  :host([running]) button::after {
    content: "";
    position: absolute;
    bottom: 0;
    left: 4px;
    right: 4px;
    height: 2px;
    background: #76b9ed;
  }
  :host([active]) button::after { left: 0; right: 0; }
</style>
<button><slot></slot></button>
`)

define('task-bar', `
<style>
  ${reset}
  :host { display: flex; align-items: center; height: 40px; background: #010308; color: #fff; }
  .apps { display: flex; gap: 1px; padding-left: 3px; }
  .tray { display: flex; align-items: center; margin-left: auto; }
  .tray button { width: 24px; height: 40px; }
  time { width: 66px; text-align: center; font-size: 11px; line-height: 18px; }
  .tray .notes { width: 40px; position: relative; margin-right: 8px; }
  .notes span {
    position: absolute;
    left: 19px;
    top: 18px;
    width: 18px;
    height: 18px;
    border: 1px solid #888;
    border-radius: 50%;
    background: #333;
    font-size: 11px;
    line-height: 15px;
    font-weight: 600;
  }
  .peek { width: 5px; height: 40px; border-left: 1px solid #555; }
</style>
<task-button><svg-icon name="start"></svg-icon></task-button>
<task-button><svg-icon name="glass"></svg-icon></task-button>
<task-button><svg-icon name="taskview"></svg-icon></task-button>
<div class="apps">
  <task-button active running><svg-icon name="edgework" size="24"></svg-icon></task-button>
  <task-button running><svg-icon name="explorer" size="24"></svg-icon></task-button>
  <task-button><svg-icon name="snip" size="24"></svg-icon></task-button>
  <task-button running><svg-icon name="phone" size="24"></svg-icon></task-button>
  <task-button running><svg-icon name="outlook" size="24"></svg-icon></task-button>
  <task-button running><svg-icon name="keepass" size="24"></svg-icon></task-button>
</div>
<div class="tray">
  <button aria-label="Ausgeblendete Symbole"><svg-icon name="traychev"></svg-icon></button>
  <button aria-label="Datenträger"><svg-icon name="usb"></svg-icon></button>
  <button aria-label="Netzwerk"><svg-icon name="network"></svg-icon></button>
  <button aria-label="Lautstärke"><svg-icon name="sound"></svg-icon></button>
  <time>10:19<br>12.07.2024</time>
  <button class="notes" aria-label="Benachrichtigungen"><svg-icon name="notify"></svg-icon><span>21</span></button>
  <div class="peek"></div>
</div>
`)
</script>
</body>
</html>
